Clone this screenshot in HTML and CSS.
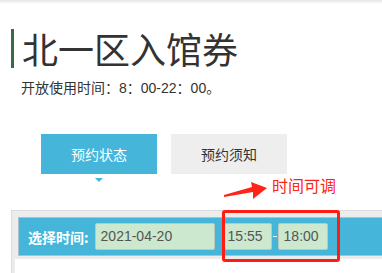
FILE: index.html
```html
<!DOCTYPE html>
<html lang="zh-CN">
<head>
    <meta charset="UTF-8">
    <meta name="viewport" content="width=device-width, initial-scale=1.0">
    <title>北一区入馆券</title>
    <link rel="stylesheet" href="styles.css">
</head>
<body>

    <div class="topbar"></div>

    <div class="header">
        <h1 class="title">北一区入馆券</h1>
        <p class="hours">开放使用时间<span class="colon">：</span>8<span class="colon">：</span>00-22<span class="colon">：</span>00。</p>
    </div>

    <div class="tabs">
        <div class="tab active">预约状态</div>
        <div class="tab">预约须知</div>
    </div>

    <div class="panel">
        <div class="bar">
            <span class="label">选择时间:</span>
            <span class="field date">2021-04-20</span>
            <span class="field time first">15:55</span>
            <span class="dash"></span>
            <span class="field time">18:00</span>
        </div>
        <div class="content"></div>
    </div>

    <!-- 标注 -->
    <svg class="arrow" width="48" height="22" viewBox="0 0 48 22">
        <polygon points="2,15 30,7 29,2 45,8 31,19 31,12 2,17" fill="#ff2416"/>
    </svg>
    <div class="note">时间可调</div>
    <div class="highlight"></div>

</body>
</html>
```

FILE: styles.css
```css
body {
    margin: 0;
    background-color: #ffffff;
    font-family: 'Liberation Sans', 'Noto Sans CJK SC', sans-serif;
    color: #333333;
    overflow: hidden;
    position: relative;
}

.topbar {
    height: 4px;
    background: linear-gradient(#e6e6e6, #ffffff);
}

.header {
    margin-top: 25px;
}

.title {
    margin: 0 0 0 11px;
    border-left: 3px solid #3b6b45;
    padding-left: 8px;
    height: 39px;
    line-height: 39px;
    font-size: 36px;
    font-weight: normal;
    font-family: 'Noto Sans CJK SC', sans-serif;
    color: #333333;
}

.hours {
    margin: 10px 0 0 21px;
    font-size: 14px;
    line-height: 18px;
    color: #333333;
}

/* 全角冒号居中 */
.colon {
    font-family: 'Noto Sans CJK JP', sans-serif;
}

.tabs {
    display: flex;
    gap: 14px;
    margin-top: 37px;
    padding-left: 41px;
}

.tab {
    position: relative;
    width: 116px;
    height: 40px;
    line-height: 40px;
    text-align: center;
    font-size: 14px;
    font-family: 'Noto Sans CJK SC', sans-serif;
    background-color: #eeeeee;
    color: #333333;
}

.tab.active {
    background-color: #45b6da;
    color: #ffffff;
}

.tab.active::after {
    content: '';
    position: absolute;
    left: 54px;
    top: 44px;
    border-top: 4px solid #45b6da;
    border-left: 4px solid transparent;
    border-right: 4px solid transparent;
}

.panel {
    margin: 36px 0 0 11px;
    border: 1px solid #dcdcdc;
    border-right: none;
    border-bottom: none;
    background-color: #ececec;
    padding-top: 6px;
}

.bar {
    display: flex;
    align-items: center;
    margin-left: 6px;
    height: 37px;
    padding-left: 9px;
    border: 1px solid #a9c3cc;
    border-right: none;
    background-color: #45b6da;
}

.label {
    font-family: 'Noto Sans CJK SC', sans-serif;
    font-size: 14px;
    font-weight: bold;
    color: #ffffff;
}

.field {
    box-sizing: border-box;
    height: 27px;
    line-height: 25px;
    padding-left: 5px;
    border: 1px solid #b9c9bb;
    border-radius: 2px;
    background-color: #cce8cf;
    font-size: 14px;
    color: #555555;
}

.date {
    width: 120px;
    margin-left: 6px;
}

.time {
    width: 50px;
}

.time.first {
    margin-left: 7px;
}

.dash {
    width: 6px;
    display: flex;
    justify-content: center;
}

.dash::before {
    content: '';
    width: 4px;
    height: 1px;
    background-color: #ffffff;
}

.content {
    margin: 3px 0 0 3px;
    height: 15px;
    background-color: #ffffff;
}

.arrow {
    position: absolute;
    left: 222px;
    top: 180px;
}

.note {
    position: absolute;
    left: 272px;
    top: 176px;
    font-family: 'Noto Sans CJK SC', sans-serif;
    font-size: 16px;
    line-height: 18px;
    color: #ff2416;
}

.highlight {
    position: absolute;
    left: 222px;
    top: 210px;
    box-sizing: border-box;
    width: 118px;
    height: 52px;
    border: 3px solid #ff1c12;
    border-radius: 3px;
}
```
